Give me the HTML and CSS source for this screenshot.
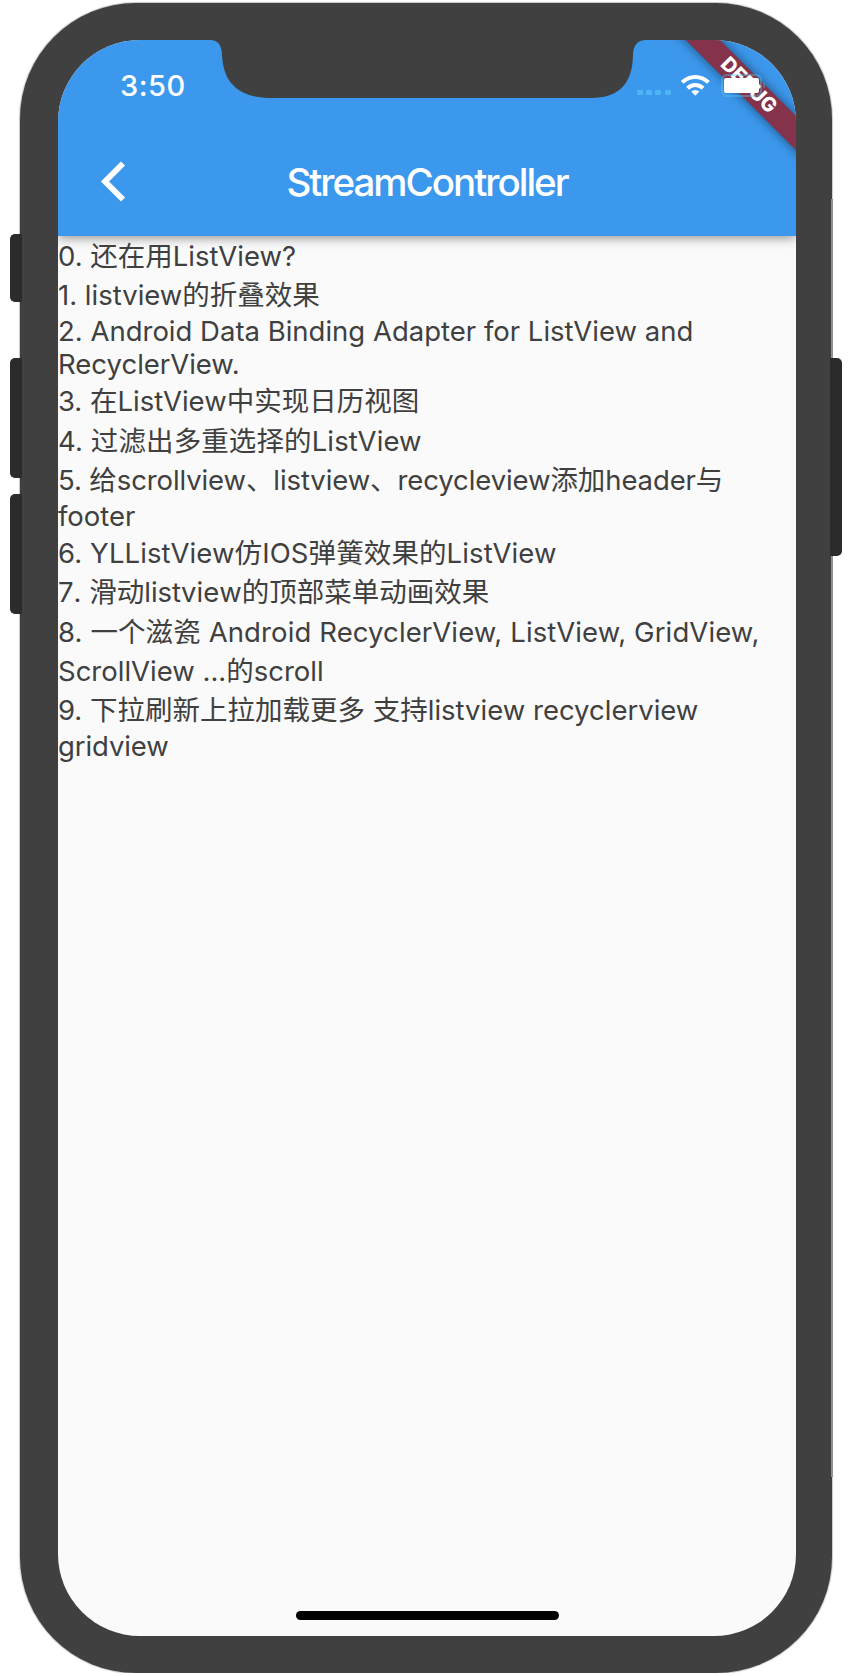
FILE: index.html
```html
<!DOCTYPE html>
<html lang="zh-CN">
<head>
<meta charset="utf-8">
<title>StreamController</title>
<link rel="stylesheet" href="styles.css">
</head>
<body>
<div class="device">
  <i class="edge"></i>
  <i class="key key-mute"></i><i class="key key-up"></i><i class="key key-down"></i><i class="key key-power"></i>
  <main class="screen">
    <header class="header">
      <div class="status">
        <time class="clock">3:50</time>
        <svg class="signals" width="136" height="30" viewBox="0 0 136 30">
          <g fill="#4db5f3"><rect x="3" y="18" width="6" height="5" rx="1"/><rect x="12" y="18" width="6" height="5" rx="1"/><rect x="21" y="18" width="6" height="5" rx="1"/><rect x="31" y="18" width="6" height="5" rx="1"/></g>
          <g fill="none" stroke="#fff" stroke-width="4"><path d="M48.2 10.4a18.500 18.500 0 0 1 26.200 0M53.600 16.200a11 11 0 0 1 15.400 0"/></g>
          <path fill="#fff" d="M57.300 19.500a6 6 0 0 1 8 0l-4 4.300z"/>
        </svg>
      </div>
      <nav class="bar">
        <svg class="back" width="26" height="42" viewBox="0 0 26 42"><path d="M23 2.500 5 20.500 23 38.500" fill="none" stroke="#fff" stroke-width="5.800"/></svg>
        <h1 class="title">StreamController</h1>
      </nav>
    </header>
    <section class="list">
      <p class="row">0. 还在用ListView?</p>
      <p class="row">1. listview的折叠效果</p>
      <p class="row latin">2. Android Data Binding Adapter for ListView and</p>
      <p class="row latin">RecyclerView.</p>
      <p class="row">3. 在ListView中实现日历视图</p>
      <p class="row loose">4. 过滤出多重选择的ListView</p>
      <p class="row tight">5. 给scrollview、listview、recycleview添加header与</p>
      <p class="row latin">footer</p>
      <p class="row loose">6. YLListView仿IOS弹簧效果的ListView</p>
      <p class="row unkerned">7. 滑动listview的顶部菜单动画效果</p>
      <p class="row loose">8. 一个滋瓷 Android RecyclerView, ListView, GridView,</p>
      <p class="row">ScrollView ...的scroll</p>
      <p class="row">9. 下拉刷新上拉加载更多 支持listview recyclerview</p>
      <p class="row latin tight">gridview</p>
    </section>
    <i class="home"></i>
    <div class="ribbon">DEBUG</div>
    <svg class="battery" width="48" height="26" viewBox="0 0 48 26">
      <rect x="2" y="2" width="39" height="21" rx="5" fill="none" stroke="#62c8ee" stroke-opacity=".4" stroke-width="2"/>
      <path d="M43.500 9q3 3.500 0 7z" fill="#62c8ee" fill-opacity=".5"/>
      <rect x="4" y="5" width="35" height="15" rx="2" fill="#fff"/>
    </svg>
  </main>
  <svg class="notch" width="440" height="62" viewBox="0 0 440 62"><path d="M0 0H440V4H436Q424 4 423 18Q423 62 381 62H57Q14 60 12 20Q12 4 0 4Z" fill="#404040"/></svg>
</div>
</body>
</html>
```
FILE: styles.css
```css
* { box-sizing: border-box; }
body { margin: 0; background: #fff; font-family: Inter, "Noto Sans CJK SC", sans-serif; }
.device {
  position: relative;
  width: 812px;
  height: 1670px;
  margin: 3px 0 0 20px;
  padding: 37px 36px 36px 38px;
  border-radius: 116px;
  background: #404040;
  box-shadow: 0 0 1px 1px #c8c8c8;
}
.edge { position: absolute; left: 811px; top: 196px; width: 2px; height: 1278px; background: #909090; }
.key { position: absolute; left: -10px; width: 12px; background: #2b2b2b; border-radius: 5px 0 0 5px; }
.key-mute { top: 231px; height: 68px; }
.key-up { top: 355px; height: 120px; }
.key-down { top: 491px; height: 120px; }
.key-power { left: 810px; top: 355px; height: 198px; border-radius: 0 5px 5px 0; }
.screen {
  position: relative;
  width: 738px;
  height: 1596px;
  overflow: hidden;
  border-radius: 82px;
  background: #fafafa;
}
.header {
  height: 196px;
  background: #3c98ed;
  box-shadow: 0 2px 10px rgba(0, 0, 0, .42);
}
.status {
  display: flex;
  justify-content: space-between;
  height: 87px;
  padding: 32px 26px 0 62px;
  color: #fff;
}
.clock { font-size: 29px; line-height: 28px; font-weight: 500; letter-spacing: .5px; }
.bar { display: grid; grid-template-columns: 26px 1fr 26px; align-items: center; height: 109px; padding: 0 42px; }
.title { margin: 0; text-align: center; color: #fff; font-size: 38.5px; line-height: 48px; font-weight: 500; letter-spacing: -2px; }
.list { padding-top: 1px; font-size: 27.5px; color: #404040; }
.row { margin: 0; height: 39.35px; line-height: 39.35px; white-space: pre; }
.latin { height: 33.4px; line-height: 31.8px; }
.loose { letter-spacing: .11px; }
.tight { letter-spacing: -.1px; }
.unkerned { font-kerning: none; }
.home { position: absolute; left: 238px; bottom: 16px; width: 263px; height: 9px; border-radius: 5px; background: #000; }
.ribbon {
  position: absolute;
  left: 591.5px;
  top: 34.7px;
  width: 200px;
  height: 23.6px;
  padding-right: 4px;
  transform: rotate(45deg);
  background: #84334a;
  box-shadow: 0 0 12px rgba(0, 0, 0, .5);
  color: #fff;
  font-size: 20px;
  line-height: 23.6px;
  font-weight: 800;
  text-align: center;
}
.battery { position: absolute; left: 662px; top: 33px; }
.notch { position: absolute; left: 190px; top: 33px; }
```
